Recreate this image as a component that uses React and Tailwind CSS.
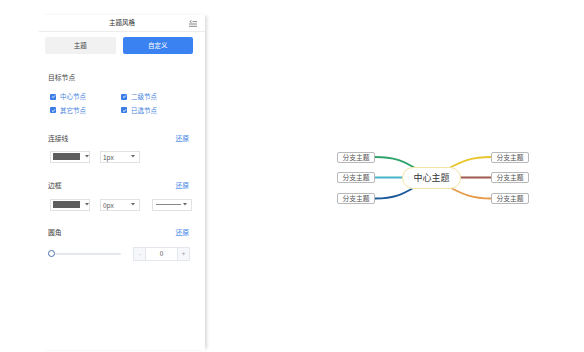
import React from 'react';

const Caret = () => (
  <svg width="4" height="3" viewBox="0 0 4 3" className="shrink-0">
    <path d="M0 0 L4 0 L2 2.5 Z" fill="#666" />
  </svg>
);

const Check = ({ label }) => (
  <div className="flex h-[9px] items-center gap-[4px]">
    <span className="flex h-[6px] w-[6px] items-center justify-center rounded-[1px] bg-[#3b7de6]">
      <svg width="5" height="5" viewBox="0 0 5 5">
        <path d="M1 2.6 L2.1 3.6 L4 1.4" fill="none" stroke="#fff" strokeWidth="0.9" />
      </svg>
    </span>
    <span className="text-[6.5px] leading-[9px] text-[#4a86e0]">{label}</span>
  </div>
);

const SectionTitle = ({ title, reset, className }) => (
  <div className={`flex h-[9px] items-center justify-between pr-[1px] ${className}`}>
    <span className="text-[6.8px] leading-[9px] text-[#444]">{title}</span>
    {reset && <span className="text-[6.8px] leading-[9px] text-[#3b82e6]">还原</span>}
  </div>
);

const ColorSelect = () => (
  <div className="flex h-[12px] w-[40px] items-center gap-[5px] border border-[#e2e2e2] bg-white pl-[2px]">
    <span className="h-[7px] w-[28px] bg-[#5e5e5e]" />
    <Caret />
  </div>
);

const TextSelect = ({ value }) => (
  <div className="flex h-[12px] w-[40px] items-center justify-between border border-[#e2e2e2] bg-white pl-[2px] pr-[4px]">
    <span className="text-[6.5px] leading-[10px] text-[#555]">{value}</span>
    <Caret />
  </div>
);

const LineSelect = () => (
  <div className="flex h-[12px] w-[40px] items-center justify-between border border-[#e2e2e2] bg-white pl-[3px] pr-[4px]">
    <span className="h-px w-[25px] bg-[#888]" />
    <Caret />
  </div>
);

const Branch = ({ className }) => (
  <div
    className={`absolute flex h-[11px] w-[38px] items-center justify-center rounded-[2px] border border-[#b8b8b8] bg-white text-[6.8px] text-[#555] ${className}`}
  >
    分支主题
  </div>
);

export default function App() {
  return (
    <div className="flex h-[352px] w-full overflow-hidden bg-white font-['Noto_Sans_CJK_SC','Liberation_Sans',sans-serif]">
      <div className="w-[39px] shrink-0" />

      <aside className="mt-[15px] h-[335px] w-[166px] shrink-0 bg-white shadow-[3px_0_3px_-1px_rgba(0,0,0,0.14)]">
        {/* 标题 */}
        <div className="relative flex h-[17px] items-center justify-center border-b border-[#ececec]">
          <span className="text-[6.5px] text-[#333]">主题风格</span>
          <svg
            width="8"
            height="7"
            viewBox="0 0 8 7"
            className="absolute right-[8px] top-[5px]"
          >
            <path d="M2.5 0.5 L0.8 1.6 L2.5 2.7" fill="none" stroke="#555" strokeWidth="0.7" />
            <path d="M3.5 1.6 H8 M0 4 H8 M0 6.3 H8" stroke="#555" strokeWidth="0.7" />
          </svg>
        </div>

        <div className="mt-[5px] flex gap-[7px] pl-[6px] pr-[12px]">
          <div className="flex h-[17px] flex-1 items-center justify-center rounded-[2px] bg-[#f1f1f1] text-[6.5px] text-[#444]">
            主题
          </div>
          <div className="flex h-[17px] flex-1 items-center justify-center rounded-[2px] bg-[#3a82f2] text-[6.5px] text-white">
            自定义
          </div>
        </div>

        <div className="pl-[9px] pr-[15px]">
          <SectionTitle title="目标节点" className="mt-[19px]" />
          <div className="mt-[10px] grid grid-cols-[71px_1fr] gap-y-[4.5px] pl-[2px]">
            <Check label="中心节点" />
            <Check label="二级节点" />
            <Check label="其它节点" />
            <Check label="已选节点" />
          </div>

          <SectionTitle title="连接线" reset className="mt-[19px]" />
          <div className="mt-[8px] flex gap-[10px] pl-[2px]">
            <ColorSelect />
            <TextSelect value="1px" />
          </div>

          <SectionTitle title="边框" reset className="mt-[18px]" />
          <div className="mt-[9px] flex pl-[2px]">
            <ColorSelect />
            <div className="ml-[10px]">
              <TextSelect value="0px" />
            </div>
            <div className="ml-[12px]">
              <LineSelect />
            </div>
          </div>

          <SectionTitle title="圆角" reset className="mt-[17px]" />
          <div className="mt-[10px] flex h-[14px] items-center">
            <div className="flex w-[75px] items-center">
              <span className="h-[7px] w-[7px] shrink-0 rounded-full border border-[#4b6fa8] bg-white" />
              <span className="h-[2px] flex-1 rounded-full bg-[#e4e7ed]" />
            </div>
            <div className="ml-[12px] flex h-[14px] w-[58px] border border-[#e4e7ed] bg-white">
              <span className="flex w-[12px] items-center justify-center border-r border-[#e4e7ed] bg-[#f5f7fa] text-[6.5px] text-[#bbb]">
                -
              </span>
              <span className="flex flex-1 items-center justify-center text-[6.5px] text-[#555]">0</span>
              <span className="flex w-[12px] items-center justify-center border-l border-[#e4e7ed] bg-[#f5f7fa] text-[6.5px] text-[#999]">
                +
              </span>
            </div>
          </div>
        </div>
      </aside>

      {/* 画布 */}
      <main className="relative flex-1">
        <div className="absolute left-[130px] top-[148px] h-[60px] w-[200px]">
          <svg width="200" height="60" viewBox="0 0 200 60" className="absolute left-0 top-0">
            <g fill="none" strokeWidth="1.8" strokeLinecap="round">
              <path d="M40 9 C 60 9, 68 13, 80 20" stroke="#2fa36b" />
              <path d="M40 29.5 L68 29.5" stroke="#45b6c8" />
              <path d="M40 50.5 C 60 50.5, 68 46, 80 39" stroke="#1c5a9b" />
              <path d="M156 9 C 136 9, 128 13, 114 20" stroke="#e9c52f" />
              <path d="M125 29.5 L156 29.5" stroke="#9c5a50" />
              <path d="M156 50.5 C 136 50.5, 128 46, 114 39" stroke="#e69a48" />
            </g>
          </svg>

          <Branch className="left-[2px] top-[4px]" />
          <Branch className="left-[2px] top-[24px]" />
          <Branch className="left-[2px] top-[45px]" />
          <Branch className="left-[156px] top-[4px]" />
          <Branch className="left-[156px] top-[24px]" />
          <Branch className="left-[156px] top-[45px]" />

          <div className="absolute left-[67px] top-[19px] flex h-[22px] w-[59px] items-center justify-center rounded-[11px] border border-[#f3e4a6] bg-white text-[9px] text-[#333]">
            中心主题
          </div>
        </div>
      </main>
    </div>
  );
}
